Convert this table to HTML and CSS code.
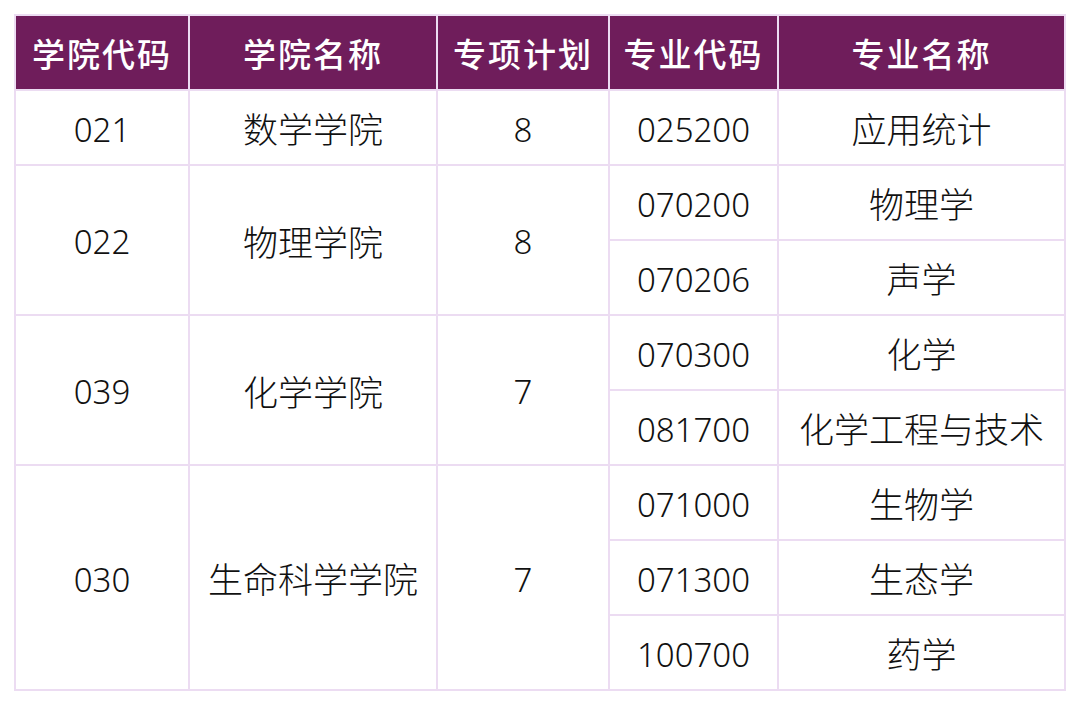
FILE: index.html
```html
<!DOCTYPE html>
<html lang="zh-CN">
<head>
<meta charset="utf-8">
<link rel="stylesheet" href="styles.css">
</head>
<body>
<table class="plan">
  <colgroup>
    <col class="c1"><col class="c2"><col class="c3"><col class="c4"><col class="c5">
  </colgroup>
  <thead>
    <tr>
      <th>学院代码</th><th>学院名称</th><th>专项计划</th><th>专业代码</th><th>专业名称</th>
    </tr>
  </thead>
  <tbody>
    <tr><td class="num">021</td><td>数学学院</td><td class="num">8</td><td class="num">025200</td><td>应用统计</td></tr>
    <tr><td class="num" rowspan="2">022</td><td rowspan="2">物理学院</td><td class="num" rowspan="2">8</td><td class="num">070200</td><td>物理学</td></tr>
    <tr><td class="num">070206</td><td>声学</td></tr>
    <tr><td class="num" rowspan="2">039</td><td rowspan="2">化学学院</td><td class="num" rowspan="2">7</td><td class="num">070300</td><td>化学</td></tr>
    <tr><td class="num">081700</td><td>化学工程与技术</td></tr>
    <tr><td class="num" rowspan="3">030</td><td rowspan="3">生命科学学院</td><td class="num" rowspan="3">7</td><td class="num">071000</td><td>生物学</td></tr>
    <tr><td class="num">071300</td><td>生态学</td></tr>
    <tr><td class="num">100700</td><td>药学</td></tr>
  </tbody>
</table>
</body>
</html>
```

FILE: styles.css
```css
html, body {
  margin: 0;
  padding: 0;
  background: #ffffff;
}
body {
  padding: 14px 0 0 14px;
  font-family: "Noto Sans", "Noto Sans CJK SC", sans-serif;
}
.plan {
  border-collapse: collapse;
  table-layout: fixed;
  width: 1050px;
}
.c1 { width: 174px; }
.c2 { width: 248px; }
.c3 { width: 172px; }
.c4 { width: 169px; }
.c5 { width: 287px; }
.plan th,
.plan td {
  border: 2px solid #ecdcf2;
  height: 75px;
  padding: 0;
  text-align: center;
  vertical-align: middle;
  box-sizing: border-box;
  white-space: nowrap;
}
.plan th {
  background: #6f1d5b;
  color: #ffffff;
  font-family: "Noto Sans CJK SC", sans-serif;
  font-size: 33px;
  font-weight: 500;
  letter-spacing: 2px;
}
.plan td {
  color: #111111;
  font-family: "Noto Sans CJK SC", sans-serif;
  font-size: 35px;
  font-weight: 300;
}
.plan td.num {
  font-family: "Noto Sans", sans-serif;
  font-size: 33px;
  font-weight: 300;
  padding-top: 3px;
}
```
